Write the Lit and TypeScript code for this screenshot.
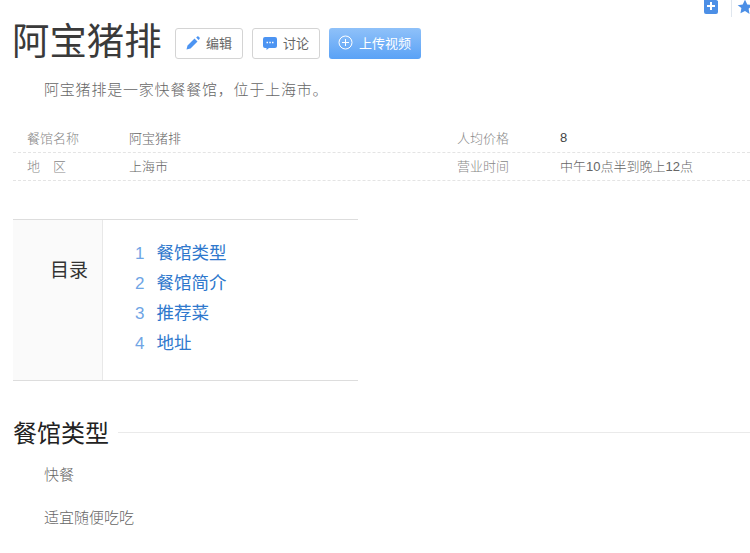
import { LitElement, html, css } from "lit";
import { customElement } from "lit/decorators.js";

@customElement("app-root")
export class AppRoot extends LitElement {
  static styles = css`
    :host { display: block; position: relative; width: 750px; height: 553px; overflow: hidden; background: #fff; font-family: "Liberation Sans", "Noto Sans CJK SC", sans-serif; }
  `;
  render() { return html`<lemma-page></lemma-page>`; }
}

@customElement("lemma-page")
export class LemmaPage extends LitElement {
  static styles = css`
    :host { display: block; box-sizing: border-box; width: 750px; height: 553px; padding: 17px 0 0 13px; color: #333; font-family: "Liberation Sans", "Noto Sans CJK SC", sans-serif; }
    .corner { position: absolute; top: 0; right: 0; height: 17px; width: 46px; }
    .corner svg { position: absolute; }
    .corner .plus { left: 0; top: -2px; }
    .corner .sep { left: 27px; top: 0; width: 1px; height: 17px; background: #dfe6ee; position: absolute; }
    .corner .star { left: 33px; top: -1px; }
    .head { display: flex; align-items: flex-start; height: 46px; margin-left: -1px; }
    h1 { margin: 2px 0 0; font-size: 37.4px; font-weight: 400; line-height: 46px; color: #3a3a3a; width: 163px; flex: none; }
    .btns { display: flex; gap: 9px; margin-top: 11px; }
    .btn { box-sizing: border-box; display: flex; align-items: center; height: 31px; border: 1px solid #d4d4d4; border-radius: 3px; padding: 0 0 2px 10px; font-size: 13px; color: #666; background: #fff; gap: 6px; width: 68px; white-space: nowrap; }
    .btn.up { width: 92px; border: 0; color: #fff; background: linear-gradient(#8fc1f9, #5aa2f6); padding-left: 9px; gap: 6px; }
    .btn svg { flex: none; }
    .summary { margin: 17px 0 0 31px; font-size: 15px; letter-spacing: 0.8px; line-height: 20px; color: #666; font-weight: 300; }
    .info { margin-top: 25px; width: 737px; font-size: 13px; color: #666; }
    .row { display: grid; grid-template-columns: 102px 328px 103px 1fr; height: 28px; align-items: center; border-bottom: 1px dashed #e4e4e4; box-sizing: border-box; padding: 0 0 2px 14px; }
    .row span { white-space: nowrap; font-weight: 300; }
    .row .k { color: #888; }
    .row .sp { letter-spacing: 13px; }
    .row .dark { color: #444; font-weight: 400; }
    .toc { display: flex; margin-top: 38px; width: 345px; height: 162px; border-top: 1px solid #ddd; border-bottom: 1px solid #ddd; box-sizing: border-box; }
    .toc-title { box-sizing: border-box; width: 90px; background: #fafafa; border-right: 1px solid #e8e8e8; text-align: right; padding: 38px 14px 0 0; font-size: 19px; line-height: 26px; color: #333; }
    ol { list-style: none; margin: 0; padding: 18px 0 0 32px; }
    li { display: flex; height: 30px; align-items: baseline; font-size: 17.5px; line-height: 30px; color: #2f78cd; }
    li i { font-style: normal; width: 21.500px; color: #6fa5e5; font-size: 17px; }
    .sect { display: flex; align-items: center; margin-top: 36px; height: 32px; }
    h2 { margin: 2px 0 0; font-size: 24px; font-weight: 400; color: #222; line-height: 32px; flex: none; }
    .rule { flex: 1; height: 1px; background: #eaeaea; margin: -2px 0 0 9px; }
    p { margin: 0 0 0 31px; font-size: 15px; line-height: 22px; color: #666; font-weight: 300; }
    p.a { margin-top: 15px; }
    p.b { margin-top: 21px; }
  `;
  render() {
    return html`
      <div class="corner">
        <svg class="plus" width="14" height="16" viewBox="0 0 14 16"><path d="M2 0h7l5 3v11a2 2 0 0 1-2 2H2a2 2 0 0 1-2-2V2a2 2 0 0 1 2-2z" fill="#4c8fe6"/><path d="M7 4v8M3 8h8" stroke="#fff" stroke-width="2"/></svg>
        <span class="sep"></span>
        <svg class="star" width="16" height="16" viewBox="0 0 24 24"><path d="M12 1l3.4 7.2 7.6 1-5.600 5.400 1.400 7.800L12 18l-6.800 3.400 1.400-7.800L1 9.200l7.600-1z" fill="#4c8fe6"/></svg>
      </div>
      <div class="head">
        <h1>阿宝猪排</h1>
        <div class="btns">
          <div class="btn">
            <svg width="14" height="14" viewBox="0 0 14 14"><path d="M0.500 13.500l1-4 7-7 3 3-7 7zM10.200 1.600l1-1a1 1 0 0 1 1.300 0l1 1a1 1 0 0 1 0 1.300l-1 1z" fill="#4c94f2"/></svg>编辑
          </div>
          <div class="btn">
            <svg width="14" height="14" viewBox="0 0 14 14"><path d="M2 1h10a2 2 0 0 1 2 2v7a2 2 0 0 1-2 2H6l-2.500 2v-2H2a2 2 0 0 1-2-2V3a2 2 0 0 1 2-2z" fill="#4c94f2"/><path d="M3.500 6.500h1.500M6.300 6.500h1.500M9 6.500h1.500" stroke="#fff" stroke-width="1.500"/></svg>讨论
          </div>
          <div class="btn up">
            <svg width="15" height="15" viewBox="0 0 15 15"><circle cx="7.500" cy="7.500" r="6.500" fill="none" stroke="#fff"/><path d="M7.500 4v7M4 7.500h7" stroke="#fff"/></svg>上传视频
          </div>
        </div>
      </div>
      <div class="summary">阿宝猪排是一家快餐餐馆&#xFF0C;位于上海市。</div>
      <div class="info">
        <div class="row"><span class="k">餐馆名称</span><span>阿宝猪排</span><span class="k">人均价格</span><span class="dark">8</span></div>
        <div class="row"><span class="k sp">地区</span><span>上海市</span><span class="k">营业时间</span><span>中午10点半到晚上12点</span></div>
      </div>
      <div class="toc">
        <div class="toc-title">目录</div>
        <ol>
          <li><i>1</i>餐馆类型</li>
          <li><i>2</i>餐馆简介</li>
          <li><i>3</i>推荐菜</li>
          <li><i>4</i>地址</li>
        </ol>
      </div>
      <div class="sect"><h2>餐馆类型</h2><div class="rule"></div></div>
      <p class="a">快餐</p>
      <p class="b">适宜随便吃吃</p>
    `;
  }
}
